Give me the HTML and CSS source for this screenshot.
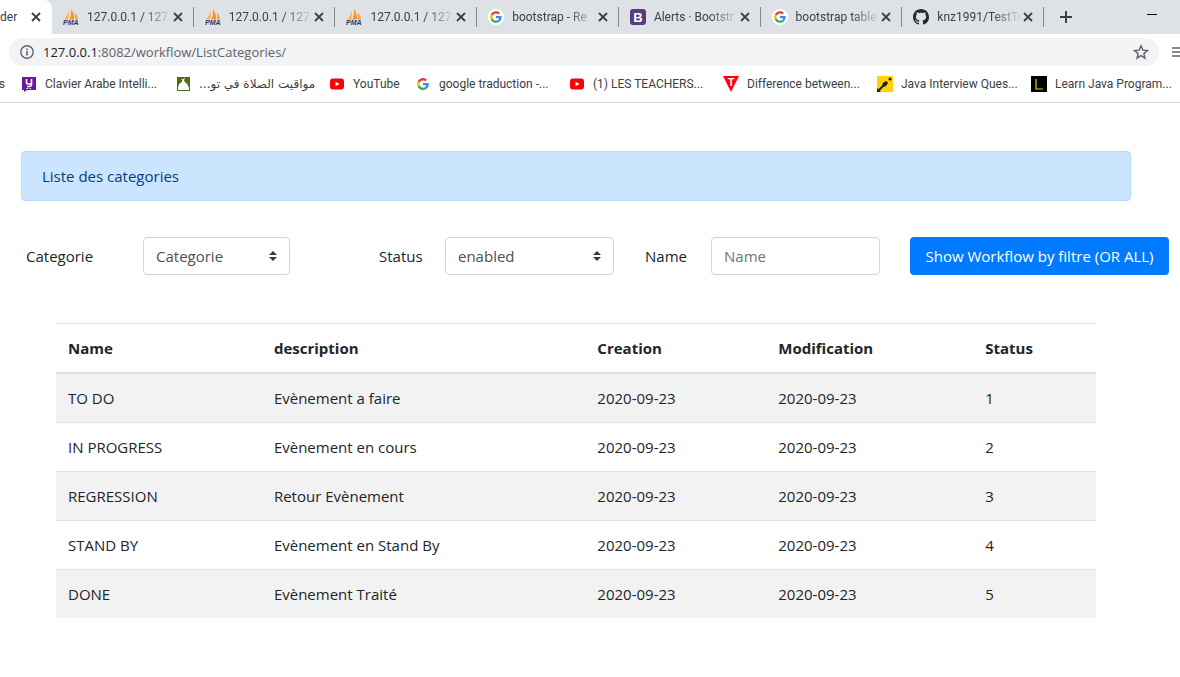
FILE: index.html
```html
<!DOCTYPE html>
<html lang="fr">
<head>
<meta charset="utf-8">
<title>Liste des categories</title>
<link rel="stylesheet" href="styles.css">
</head>
<body>
<svg class="defs" aria-hidden="true">
  <symbol id="close" viewBox="0 0 12 12"><path d="M2 2l8 8M10 2l-8 8" stroke="#3c4043" stroke-width="1.8" fill="none"/></symbol>
  <symbol id="google" viewBox="0 0 48 48">
    <path fill="#ea4335" d="M24 9.500c3.500 0 6.700 1.200 9.200 3.600l6.900-6.900C35.900 2.400 30.500 0 24 0 14.600 0 6.500 5.400 2.600 13.200l8 6.200C12.400 13.700 17.700 9.500 24 9.500z"/>
    <path fill="#4285f4" d="M47 24.500c0-1.600-.2-3.100-.4-4.500H24v9h12.900c-.6 3-2.200 5.500-4.800 7.200l7.700 6C44.400 38 47 31.800 47 24.500z"/>
    <path fill="#fbbc05" d="M10.500 28.600c-.5-1.500-.8-3-.8-4.600s.3-3.100.8-4.600l-8-6.200C.9 16.500 0 20.100 0 24s.9 7.500 2.600 10.800z"/>
    <path fill="#34a853" d="M24 48c6.500 0 11.900-2.100 15.900-5.800l-7.700-6c-2.200 1.500-4.900 2.300-8.200 2.300-6.300 0-11.600-4.200-13.500-9.900l-8 6.200C6.500 42.600 14.600 48 24 48z"/>
  </symbol>
  <symbol id="pma" viewBox="0 0 16 16">
    <path d="M6 1.500c.2 3-.2 6-1 9H.8C3.500 8.500 5.200 5 6 1.500z" fill="#fbb03b"/>
    <path d="M8 0c2.300 3 3.300 6.800 3.200 10.500H6.500C7.800 7.500 8.400 3.500 8 0z" fill="#f7931e"/>
    <path d="M11.500 3.500c2.200 2 3.300 4.500 3.600 7h-3c.1-2.500 0-5-.6-7z" fill="#f9a13a"/>
    <text x="0" y="16" font-family="Liberation Sans" font-size="7" font-weight="bold" font-style="italic" fill="#33336b">PMA</text>
  </symbol>
  <symbol id="youtube" viewBox="0 0 16 16"><rect x="1" y="2.500" width="14" height="11" rx="3" fill="#f00"/><path d="M6.500 5.700v4.600l4-2.300z" fill="#fff"/></symbol>
</svg>

<header class="browser">
  <div class="tabbar">
    <div class="tabs">
      <div class="tab tab-active">
        <span>der</span>
        <button class="tab-close" aria-label="Close"><svg><use href="#close"/></svg></button>
      </div>
      <div class="tab"><svg class="fav"><use href="#pma"/></svg><span class="tab-title">127.0.0.1 / 127</span><button class="tab-close" aria-label="Close"><svg><use href="#close"/></svg></button></div>
      <div class="tab"><svg class="fav"><use href="#pma"/></svg><span class="tab-title">127.0.0.1 / 127</span><button class="tab-close" aria-label="Close"><svg><use href="#close"/></svg></button></div>
      <div class="tab"><svg class="fav"><use href="#pma"/></svg><span class="tab-title">127.0.0.1 / 127</span><button class="tab-close" aria-label="Close"><svg><use href="#close"/></svg></button></div>
      <div class="tab"><svg class="fav fav-round"><use href="#google"/></svg><span class="tab-title">bootstrap - Re</span><button class="tab-close" aria-label="Close"><svg><use href="#close"/></svg></button></div>
      <div class="tab"><svg class="fav" viewBox="0 0 16 16"><rect width="16" height="16" rx="3" fill="#563d7c"/><text x="8" y="12.500" text-anchor="middle" font-family="Liberation Sans" font-weight="bold" font-size="13" fill="#fff">B</text></svg><span class="tab-title">Alerts · Bootstr</span><button class="tab-close" aria-label="Close"><svg><use href="#close"/></svg></button></div>
      <div class="tab"><svg class="fav fav-round"><use href="#google"/></svg><span class="tab-title">bootstrap table</span><button class="tab-close" aria-label="Close"><svg><use href="#close"/></svg></button></div>
      <div class="tab"><svg class="fav" viewBox="0 0 16 16"><path fill="#24292e" d="M8 0C3.580 0 0 3.580 0 8c0 3.540 2.290 6.530 5.470 7.590.4.070.55-.17.55-.38 0-.19-.01-.82-.01-1.490-2.010.37-2.530-.49-2.690-.94-.09-.23-.48-.94-.82-1.130-.28-.15-.68-.52-.01-.53.63-.01 1.080.58 1.230.82.72 1.210 1.870.87 2.330.66.070-.52.280-.87.510-1.070-1.780-.2-3.640-.89-3.640-3.950 0-.87.310-1.590.820-2.150-.08-.2-.36-1.020.080-2.120 0 0 .67-.21 2.200.82.640-.18 1.320-.27 2-.27s1.360.09 2 .27c1.530-1.040 2.200-.82 2.200-.82.440 1.100.160 1.920.080 2.120.510.560.820 1.270.820 2.150 0 3.070-1.870 3.750-3.650 3.950.290.250.540.730.540 1.480 0 1.070-.01 1.930-.01 2.200 0 .210.150.460.550.380A8.010 8.010 0 0016 8c0-4.420-3.580-8-8-8z"/></svg><span class="tab-title">knz1991/TestTe</span><button class="tab-close" aria-label="Close"><svg><use href="#close"/></svg></button></div>
    </div>
    <button class="new-tab" aria-label="New tab"><svg viewBox="0 0 12 12"><path d="M6 0v12M0 6h12" stroke="#3c4043" stroke-width="2"/></svg></button>
    <button class="minimize" aria-label="Minimize"><svg viewBox="0 0 10 10"><path d="M0 4.500h10" stroke="#000"/></svg></button>
  </div>

  <div class="toolbar">
    <div class="address">
      <svg class="info" viewBox="0 0 16 16"><circle cx="8" cy="8" r="6.200" fill="none" stroke="#5f6368" stroke-width="1.400"/><path d="M8 7v4.500M8 4.500v1.600" stroke="#5f6368" stroke-width="1.600"/></svg>
      <span class="url"><b>127.0.0.1</b>:8082/workflow/ListCategories/</span>
      <button class="star" aria-label="Bookmark"><svg viewBox="0 0 16 16"><path d="M8 1.800l1.800 4.300 4.700.4-3.600 3.100 1.100 4.600L8 11.700l-4 2.500 1.100-4.600L1.500 6.500l4.700-.4z" fill="none" stroke="#5f6368" stroke-width="1.400"/></svg></button>
    </div>
    <button class="menu" aria-label="Menu"><svg viewBox="0 0 8 12"><path d="M0 2h8M0 6h8M0 10h8" stroke="#5f6368" stroke-width="1.500"/></svg></button>
  </div>

  <nav class="bookmarks">
    <a class="bookmark bookmark-cut" href="#">s</a>
    <a class="bookmark" href="#"><svg class="fav" viewBox="0 0 16 16"><path d="M1 1h14v13H6l-3 2v-2H1z" fill="#6a1b9a"/><path d="M5.500 3v3.500c0 1 .5 1.500 1.500 1.500h3M10.500 3v5.500c0 1.500-1 2-2.500 2H6" fill="none" stroke="#fff" stroke-width="1.600"/><path d="M5.500 12.500h1.500M8.500 12.500H10" stroke="#fff"/></svg><span>Clavier Arabe Intelli...</span></a>
    <a class="bookmark" href="#"><svg class="fav" viewBox="0 0 16 16"><rect x="2" y="1" width="13" height="14" fill="#4f6b12"/><path d="M3 14v-2.500c.3-1.500 1-2.200 1-3.500 1.200-.6 2.500-1.800 3.500-3.200L6 2.500l2 1 2-2-1 3c.8 1.700 2.500 2.900 3.500 3.500 0 1.300.8 2 1.500 3.500V14z" fill="#fff"/></svg><span class="arabic" dir="rtl" lang="ar">مواقيت الصلاة في تو...</span></a>
    <a class="bookmark bookmark-short" href="#"><svg class="fav"><use href="#youtube"/></svg><span>YouTube</span></a>
    <a class="bookmark" href="#"><svg class="fav fav-inset"><use href="#google"/></svg><span>google traduction -...</span></a>
    <a class="bookmark" href="#"><svg class="fav"><use href="#youtube"/></svg><span>(1) LES TEACHERS...</span></a>
    <a class="bookmark" href="#"><svg class="fav" viewBox="0 0 16 16"><path d="M0 0h16L8 16z" fill="#f00"/><text x="8" y="10" text-anchor="middle" font-family="Liberation Sans" font-weight="bold" font-size="11" fill="#fff">T</text></svg><span>Difference between...</span></a>
    <a class="bookmark" href="#"><svg class="fav" viewBox="0 0 16 16"><rect width="16" height="16" fill="#ffd400"/><path d="M1 15l8-8" stroke="#222" stroke-width="2"/><ellipse cx="8" cy="8" rx="3.200" ry="2" transform="rotate(-45 8 8)" fill="#222"/><circle cx="13" cy="3" r="1.600" fill="#222"/><path d="M0 16v-4l4 4z" fill="#222"/></svg><span>Java Interview Ques...</span></a>
    <a class="bookmark" href="#"><svg class="fav" viewBox="0 0 16 16"><rect width="16" height="16" fill="#000"/><path d="M5 3v10h7" fill="none" stroke="#e6d800" stroke-width="1.200"/></svg><span>Learn Java Program...</span></a>
  </nav>
</header>

<main class="page">
  <div class="alert" role="alert">Liste des categories</div>

  <form class="filters">
    <label for="categorie">Categorie</label>
    <select id="categorie" class="control"><option>Categorie</option></select>
    <label class="label-status" for="status">Status</label>
    <select id="status" class="control"><option>enabled</option></select>
    <label class="label-name" for="name">Name</label>
    <input id="name" class="control" type="text" placeholder="Name">
    <button class="submit" type="button">Show Workflow by filtre (OR ALL)</button>
  </form>

  <table class="table">
    <colgroup><col class="col-name"><col class="col-description"><col class="col-creation"><col class="col-modification"><col></colgroup>
    <thead>
      <tr><th scope="col">Name</th><th scope="col">description</th><th scope="col">Creation</th><th scope="col">Modification</th><th scope="col">Status</th></tr>
    </thead>
    <tbody>
      <tr><td>TO DO</td><td>Evènement a faire</td><td>2020-09-23</td><td>2020-09-23</td><td>1</td></tr>
      <tr><td>IN PROGRESS</td><td>Evènement en cours</td><td>2020-09-23</td><td>2020-09-23</td><td>2</td></tr>
      <tr><td>REGRESSION</td><td>Retour Evènement</td><td>2020-09-23</td><td>2020-09-23</td><td>3</td></tr>
      <tr><td>STAND BY</td><td>Evènement en Stand By</td><td>2020-09-23</td><td>2020-09-23</td><td>4</td></tr>
      <tr><td>DONE</td><td>Evènement Traité</td><td>2020-09-23</td><td>2020-09-23</td><td>5</td></tr>
    </tbody>
  </table>
</main>
</body>
</html>
```
FILE: styles.css
```css
* { box-sizing: border-box; }

body {
  margin: 0;
  background: #fff;
  color: #212529;
  font: 15px/24px "Open Sans", "Noto Sans", sans-serif;
}

button {
  padding: 0;
  border: 0;
  background: none;
  font: inherit;
}

svg { display: block; }
.defs { display: none; }

/* Browser chrome */
.browser {
  border-bottom: 1px solid #d5d7da;
  color: #3c4043;
  font: 12px/16px Roboto, "Open Sans", sans-serif;
}

.tabbar {
  display: flex;
  height: 34px;
  background: #dee1e6;
}

.tabs {
  display: flex;
  flex: 1;
  min-width: 0;
}

.tab {
  display: flex;
  flex: 1 1 0;
  align-items: center;
  min-width: 0;
  padding: 0 10px 0 11px;
  position: relative;
}

.tab::after {
  content: "";
  position: absolute;
  right: 0;
  top: 7px;
  width: 1px;
  height: 20px;
  background: #85888d;
}

.tab-active {
  flex: 0 0 52px;
  justify-content: space-between;
  padding: 0 10px 0 0;
  background: #fff;
  border-top-right-radius: 8px;
}

.tab-active::after { display: none; }

.tab-title {
  flex: 1;
  min-width: 0;
  margin: 0 0 0 8px;
  overflow: hidden;
  white-space: nowrap;
  -webkit-mask-image: linear-gradient(to right, #000 65%, transparent);
  mask-image: linear-gradient(to right, #000 65%, transparent);
}

.tab-close svg { width: 12px; height: 12px; }

.fav {
  flex: none;
  width: 16px;
  height: 16px;
}

.fav-round {
  padding: 2px;
  border-radius: 50%;
  background: #fff;
}

.fav-inset { padding: 2px; }

.new-tab { margin: 0 75px 0 16px; }
.new-tab svg { width: 12px; height: 12px; }
.minimize { margin: 0 23px 4px 0; }
.minimize svg { width: 10px; height: 10px; }

.toolbar {
  display: flex;
  align-items: center;
  gap: 13px;
  padding: 4px 0 0 9px;
}

.address {
  display: flex;
  flex: 1;
  align-items: center;
  height: 28px;
  padding: 0 10px;
  border-radius: 14px;
  background: #f1f3f4;
}

.info { width: 16px; height: 16px; }

.url {
  flex: 1;
  margin-left: 8px;
  color: #5f6368;
  font-family: "Open Sans", sans-serif;
  font-size: 13px;
}

.url b { color: #202124; font-weight: 400; }
.star svg { width: 16px; height: 16px; }
.menu svg { width: 8px; height: 12px; }

.bookmarks {
  display: flex;
  gap: 16px;
  height: 36px;
  overflow: hidden;
}

.bookmark {
  display: flex;
  flex: 0 0 138px;
  align-items: center;
  gap: 8px;
  min-width: 0;
  color: #3c4043;
  text-decoration: none;
  white-space: nowrap;
}

.bookmark-cut { flex-basis: 5px; justify-content: flex-end; }
.bookmark-short { flex-basis: 70px; }
.arabic { font-family: "DejaVu Sans", sans-serif; font-size: 12px; }

/* Page content */
.page { padding: 48px 0 48px 21px; }

.alert {
  margin-right: 49px;
  padding: 12px 20px;
  border: 1px solid #b8daff;
  border-radius: 4px;
  background: #cce5ff;
  color: #004085;
}

.filters {
  display: grid;
  grid-template-columns: 117fr 147fr 155fr 169fr 97fr 169fr 289fr;
  align-items: center;
  margin: 36px 11px 0 5px;
}

.label-status { padding-left: 89px; }
.label-name { padding-left: 31px; }

.control {
  width: 100%;
  height: 38px;
  padding: 6px 12px;
  border: 1px solid #ced4da;
  border-radius: 4px;
  background: #fff;
  color: #495057;
  font: inherit;
}

.control::placeholder { color: #6c757d; opacity: 1; }

select.control {
  appearance: none;
  background: #fff url("data:image/svg+xml,%3csvg xmlns='http://www.w3.org/2000/svg' width='4' height='5' viewBox='0 0 4 5'%3e%3cpath fill='%23343a40' d='M2 0L0 2h4zm0 5L0 3h4z'/%3e%3c/svg%3e") no-repeat right 12px center / 8px 10px;
}

.submit {
  height: 38px;
  margin-left: 30px;
  border-radius: 4px;
  background: #007bff;
  color: #fff;
  white-space: nowrap;
}

.table {
  width: calc(100% - 119px);
  margin: 48px 84px 0 35px;
  border-collapse: collapse;
  table-layout: fixed;
}

.col-name { width: 19.8%; }
.col-description { width: 31.1%; }
.col-creation { width: 17.4%; }
.col-modification { width: 19.9%; }

.table th,
.table td {
  padding: 12px;
  border-top: 1px solid #dee2e6;
  text-align: left;
}

.table th { border-bottom: 2px solid #dee2e6; }
.table tbody tr:nth-child(odd) { background: #f2f2f2; }
```
